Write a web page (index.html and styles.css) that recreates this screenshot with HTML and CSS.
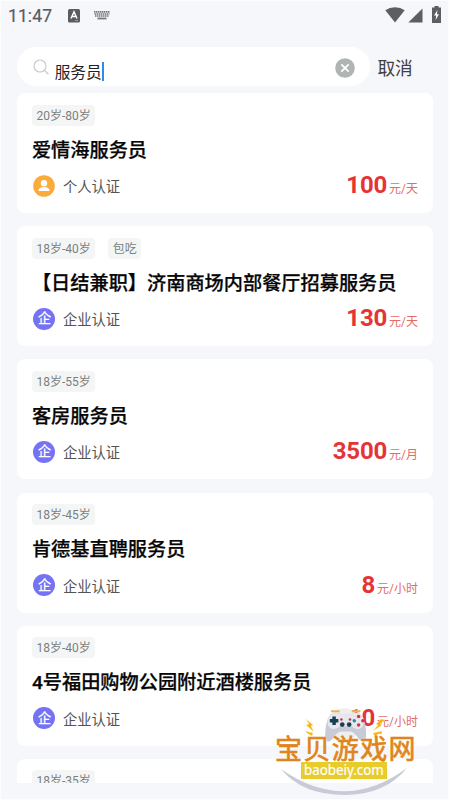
FILE: index.html
```html
<!DOCTYPE html>
<html lang="zh-CN">
<head>
<meta charset="utf-8">
<title>服务员</title>
<link rel="stylesheet" href="styles.css">
</head>
<body>
<div class="screen">
  <header class="status">
    <span class="clock">11:47</span>
    <svg class="ic-a" width="12" height="14" viewBox="0 0 12 14"><rect width="12" height="13.5" rx="1.5" fill="#5b5c5e"/><path d="M3 9.5 6 2.8 9 9.5M4.2 7.4h3.6" fill="none" stroke="#fff" stroke-width="1.5"/><path d="M7 11.5h3" stroke="#aaa" stroke-width=".8"/></svg>
    <svg class="ic-k" width="16" height="9" viewBox="0 0 16 9"><path d="M0 .9h16M.5 3h15M1 5h14" stroke="#77787a" stroke-width="1.6" stroke-dasharray="1.5 .5"/><path d="M3.5 7.5h9" stroke="#77787a" stroke-width="1.8"/></svg>
    <svg class="ic-w" width="20" height="16" viewBox="0 0 20 16"><path d="M10 15.5.3 3.3Q4.5.3 10 .3t9.7 3Z" fill="#5d5e60"/></svg>
    <svg class="ic-s" width="15" height="15" viewBox="0 0 15 15"><path d="M14.5.5v14H.3Z" fill="#5d5e60"/></svg>
    <svg class="ic-b" width="9" height="17" viewBox="0 0 9 17"><path d="M2.5 0h4v1.6H9V17H0V1.6h2.5Z" fill="#5d5e60"/><path d="M5.5 4 2 9.5h2.2L3.6 14 7 8.3H4.9Z" fill="#fff"/></svg>
  </header>
  <div class="search-row">
    <div class="search">
      <svg class="ic-search" width="17" height="17" viewBox="0 0 17 17"><circle cx="7" cy="7" r="6" fill="none" stroke="#c6c8ca" stroke-width="1.1"/><path d="m11.4 11.4 4 3.8" stroke="#c6c8ca" stroke-width="1.2"/></svg>
      <span class="query">服务员</span><i class="caret"></i>
      <svg class="ic-clear" width="20" height="20" viewBox="0 0 20 20"><circle cx="10" cy="10" r="9.8" fill="#b0b4b3"/><path d="m6.3 6.3 7.4 7.4m0-7.4-7.4 7.4" stroke="#fff" stroke-width="1.8"/></svg>
    </div>
    <span class="cancel">取消</span>
  </div>
  <main class="list">
    <article class="card">
      <div class="tags"><span class="tag">20岁-80岁</span></div>
      <h2>爱情海服务员</h2>
      <div class="meta"><svg class="badge" viewBox="0 0 22 22"><circle cx="11" cy="11" r="10.8" fill="#fbaa3c"/><circle cx="11" cy="8.2" r="3.2" fill="#fff"/><path d="M5.5 16q0-4 5.5-4t5.5 4Z" fill="#fff"/></svg><span>个人认证</span><p class="price"><b>100</b>元/天</p></div>
    </article>
    <article class="card">
      <div class="tags"><span class="tag">18岁-40岁</span><span class="tag">包吃</span></div>
      <h2>【日结兼职】济南商场内部餐厅招募服务员</h2>
      <div class="meta"><i class="badge corp">企</i><span>企业认证</span><p class="price"><b>130</b>元/天</p></div>
    </article>
    <article class="card">
      <div class="tags"><span class="tag">18岁-55岁</span></div>
      <h2>客房服务员</h2>
      <div class="meta"><i class="badge corp">企</i><span>企业认证</span><p class="price"><b>3500</b>元/月</p></div>
    </article>
    <article class="card">
      <div class="tags"><span class="tag">18岁-45岁</span></div>
      <h2>肯德基直聘服务员</h2>
      <div class="meta"><i class="badge corp">企</i><span>企业认证</span><p class="price"><b>8</b>元/小时</p></div>
    </article>
    <article class="card">
      <div class="tags"><span class="tag">18岁-40岁</span></div>
      <h2>4号福田购物公园附近酒楼服务员</h2>
      <div class="meta"><i class="badge corp">企</i><span>企业认证</span><p class="price"><b>10</b>元/小时</p></div>
    </article>
    <article class="card">
      <div class="tags"><span class="tag">18岁-35岁</span></div>
    </article>
  </main>
  <div class="watermark">
    <svg width="150" height="105" viewBox="0 0 150 105">
      <path d="M6 74Q70 119 132 73 110 100 70 100 27 100 6 74Z" fill="#c9cad8"/>
      <g transform="translate(6.2 3.8) scale(.86)">
      <circle cx="73" cy="30" r="19" fill="#eeeeef"/>
      <path d="M52 48c-2-7 0-22 4-28 3-5 9-4 13-2h12c4-2 10-3 13 2 4 6 6 21 4 28-2 4-6 1-9-3-3-5-6-7-10-7h-8c-4 0-7 2-10 7-3 4-7 7-9 3Z" fill="#c9cad8"/>
      <path d="M54 28c-1-11 8-14 14-10h14c6-4 15-1 14 10-1 8-9 9-14 4H68c-5 5-13 4-14-4Z" fill="#e6e7ef"/>
      <path d="M58 14.5h10M82 14.5h10" fill="none" stroke="#e7b45a" stroke-width="2.4"/>
      <path d="M61.5 20.5v10M56.5 25.5h10" stroke="#173f50" stroke-width="4"/>
      <circle cx="90" cy="20.5" r="2" fill="#d4333a"/><circle cx="90" cy="30.5" r="2" fill="#d4333a"/><circle cx="85" cy="25.5" r="2" fill="#268d9b"/><circle cx="95" cy="25.5" r="2" fill="#d4333a"/>
      <circle cx="71" cy="30" r="2.7" fill="#173f50"/><circle cx="79" cy="30" r="2.7" fill="#173f50"/><circle cx="70" cy="24" r="1.5" fill="#d4333a"/><circle cx="80" cy="24" r="1.5" fill="#d4333a"/>
      </g>
      <path d="m31 24 7 6-2 1 3 6-8-7 3-1ZM30 36l8 2-1 3-5-3ZM106 24l-5 5 2 1-5 6 9-6-2-1 5-4ZM107 36l-9 2 2 4 3-3h4Z" fill="#f3b21c" stroke="#fff0a0" stroke-width=".5"/>
    </svg>
    <div class="brand">宝贝游戏网</div>
    <div class="domain"><span>baobeiy.com</span></div>
  </div>
</div>
</body>
</html>
```
FILE: styles.css
```css
* { box-sizing: border-box; }
body { margin: 0; background: #fff; font-family: Roboto, "Noto Sans CJK SC", sans-serif; }
.screen { position: relative; width: 450px; height: 800px; overflow: hidden; background: #f6f7fa; border: solid #fdfdfe; border-width: 1px 2px 1px 1px; }
.status { display: flex; height: 46px; padding: 0 7px 0 7px; align-items: flex-start; color: #5b5c5e; }
.clock { width: 60px; font-size: 17.5px; line-height: 20px; margin-top: 5px; letter-spacing: .1px; -webkit-text-stroke: .2px #5b5c5e; }
.ic-a { margin-top: 7.5px; }
.ic-k { margin: 10px auto 0 14px; }
.ic-w { margin-top: 6px; }
.ic-s { margin: 7px 9px 0 3px; }
.ic-b { margin-top: 5px; }
.search-row { display: flex; align-items: center; padding-left: 16.4px; height: 39px; }
.search { display: flex; align-items: center; width: 353px; height: 39px; padding: 0 15.5px 0 15.8px; background: #fff; border-radius: 20px; }
.ic-search { margin: 1px 4.5px 0 0; }
.query { font-size: 15.7px; line-height: 20px; color: #222; margin: 12px 0 0; }
.caret { width: 2.5px; height: 19px; background: #2b8de3; margin-top: 10px; }
.ic-clear { margin-left: auto; margin-top: 2px; }
.cancel { margin: 1px 0 0 7px; font-size: 17.7px; color: #3e4042; }
.list { display: flex; flex-direction: column; gap: 13.2px; height: 696.5px; padding: 7px 15px 0 16.4px; overflow: hidden; }
.card { flex: none; height: 120px; padding: 11.5px 15px 0 14.5px; border-radius: 8px; background: #fff; }
.tags { display: flex; gap: 13px; height: 21px; }
.tag { padding: 0 4.5px; height: 21px; font-size: 12px; line-height: 22px; color: #7b7e7e; background: #f4f6f6; border-radius: 4px; }
h2 { margin: 11px 0 0; font-size: 19.2px; line-height: 28px; font-weight: 500; color: #060606; white-space: nowrap; -webkit-text-stroke: .25px #060606; }
.meta { display: flex; align-items: center; height: 26px; margin-top: 8px; padding-left: 1.5px; color: #525453; font-size: 14.3px; }
.badge { width: 22px; height: 22px; margin-right: 7.5px; }
.corp { display: flex; align-items: center; justify-content: center; border-radius: 50%; background: #7672f4; color: #fff; font-size: 13.5px; line-height: 20px; padding-bottom: 1px; font-style: normal; font-weight: 500; }
.price { display: flex; align-items: baseline; gap: 2px; margin: 3px 0 0 auto; font-size: 12px; color: #e46c68; line-height: 26px; }
.price b { font-size: 24px; letter-spacing: -.2px; color: #e63436; font-weight: 700; }
.watermark { position: absolute; left: 274px; top: 694px; width: 150px; height: 105px; }
.watermark svg { position: absolute; left: 0; top: 0; overflow: visible; }
.brand { position: absolute; left: 0; top: 35.5px; font-size: 27px; line-height: 38px; letter-spacing: 1.4px; font-weight: 400; color: #df8420; white-space: nowrap; -webkit-text-stroke: .6px #df8420; text-shadow: 0 0 1px #fff6b8, 0 0 2px #fff; }
.domain { position: absolute; left: 26px; top: 67px; width: 86px; height: 16.5px; display: flex; justify-content: center; font: 15px/15px "Noto Sans", sans-serif; color: #fff; background: #e8cc2c; white-space: nowrap; }
.domain span { transform: scaleX(.89); -webkit-text-stroke: .2px #fff; }
```
